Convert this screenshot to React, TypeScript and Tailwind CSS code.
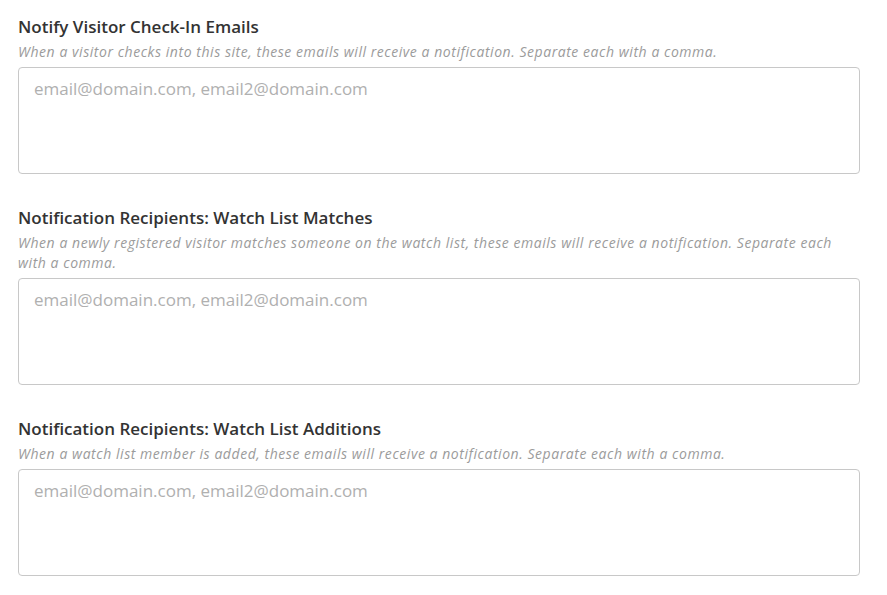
import React, { useState } from 'react';

interface NotifyField {
    key: string;
    title: string;
    help: string;
}

const fields: NotifyField[] = [
    {
        key: 'checkIn',
        title: 'Notify Visitor Check-In Emails',
        help: 'When a visitor checks into this site, these emails will receive a notification. Separate each with a comma.',
    },
    {
        key: 'watchMatches',
        title: 'Notification Recipients: Watch List Matches',
        help: 'When a newly registered visitor matches someone on the watch list, these emails will receive a notification. Separate each with a comma.',
    },
    {
        key: 'watchAdditions',
        title: 'Notification Recipients: Watch List Additions',
        help: 'When a watch list member is added, these emails will receive a notification. Separate each with a comma.',
    },
];

const App: React.FC = () => {
    const [values, setValues] = useState<Record<string, string>>({});

    const handleChange = (e: React.ChangeEvent<HTMLTextAreaElement>) => {
        setValues({ ...values, [e.target.name]: e.target.value });
    };

    return (
        <div className="min-h-screen bg-white px-[18px] pt-[17px] font-['Open_Sans','Noto_Sans',sans-serif]">
            <div className="flex w-[842px] flex-col gap-[34px]">
                {fields.map((f) => (
                    <div key={f.key}>
                        <label className="block text-[17px] leading-[20px] font-semibold text-[#333333]">
                            {f.title}
                        </label>
                        <p className="mt-[5px] text-[14px] leading-[20px] tracking-[0.55px] italic text-[#9b9b9b]">
                            {f.help}
                        </p>
                        <textarea
                            name={f.key}
                            value={values[f.key] || ''}
                            onChange={handleChange}
                            placeholder="email@domain.com, email2@domain.com"
                            className="mt-[5px] block h-[107px] w-full resize-none rounded-[4px] border border-[#c8c8c8] px-[15px] pt-[11px] text-[17px] leading-[20px] text-[#333333] placeholder:text-[#b0b0b0] outline-none"
                        />
                    </div>
                ))}
            </div>
        </div>
    );
};

export default App;
